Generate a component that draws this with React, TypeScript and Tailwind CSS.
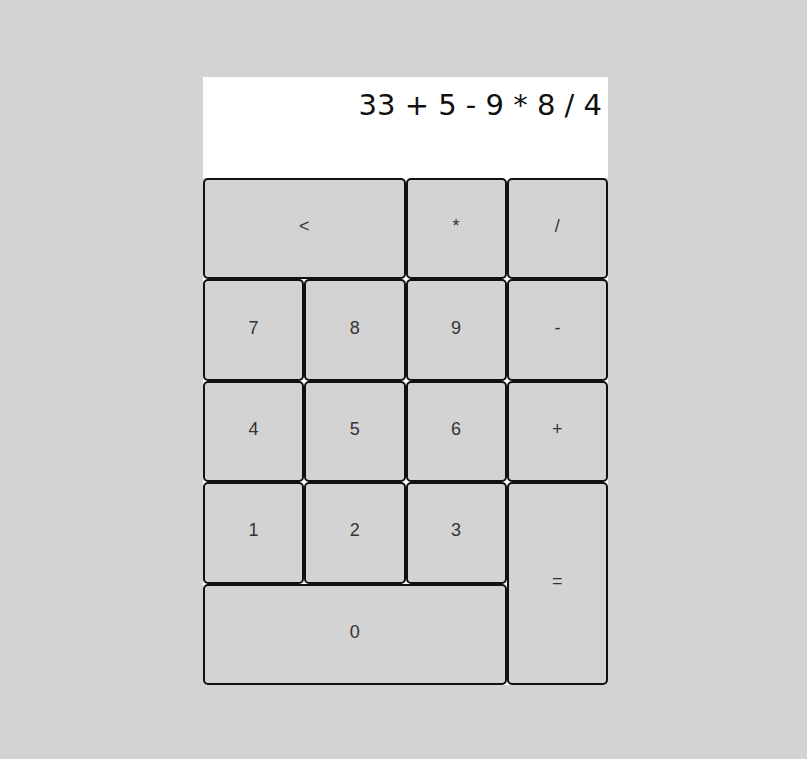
const keys: { label: string; cls: string }[] = [
  { label: "<", cls: "col-span-2" },
  { label: "*", cls: "" },
  { label: "/", cls: "" },
  { label: "7", cls: "" },
  { label: "8", cls: "" },
  { label: "9", cls: "" },
  { label: "-", cls: "" },
  { label: "4", cls: "" },
  { label: "5", cls: "" },
  { label: "6", cls: "" },
  { label: "+", cls: "" },
  { label: "1", cls: "" },
  { label: "2", cls: "" },
  { label: "3", cls: "" },
  { label: "=", cls: "row-span-2" },
  { label: "0", cls: "col-span-3" },
];

export default function App() {
  return (
    <div className="min-h-screen bg-[#d3d3d3] pt-[77px] pl-[203px]">
      <div className="w-[405px]">
        <div className="h-[101px] bg-white px-[6px] pt-[10px] text-right text-[29px] leading-[36px] text-[#111] font-['DejaVu_Sans',sans-serif]">
          33 + 5 - 9 * 8 / 4
        </div>
        <div className="grid grid-cols-4 grid-rows-[repeat(5,101.4px)] bg-white rounded-[6px]">
          {keys.map((k) => (
            <button
              key={k.label}
              className={`${k.cls} flex items-center justify-center pb-[4px] bg-[#d3d3d3] border-2 border-[#111] rounded-[5px] text-[18px] text-[#333] font-['Liberation_Sans',Arial,sans-serif]`}
            >
              {k.label}
            </button>
          ))}
        </div>
      </div>
    </div>
  );
}
